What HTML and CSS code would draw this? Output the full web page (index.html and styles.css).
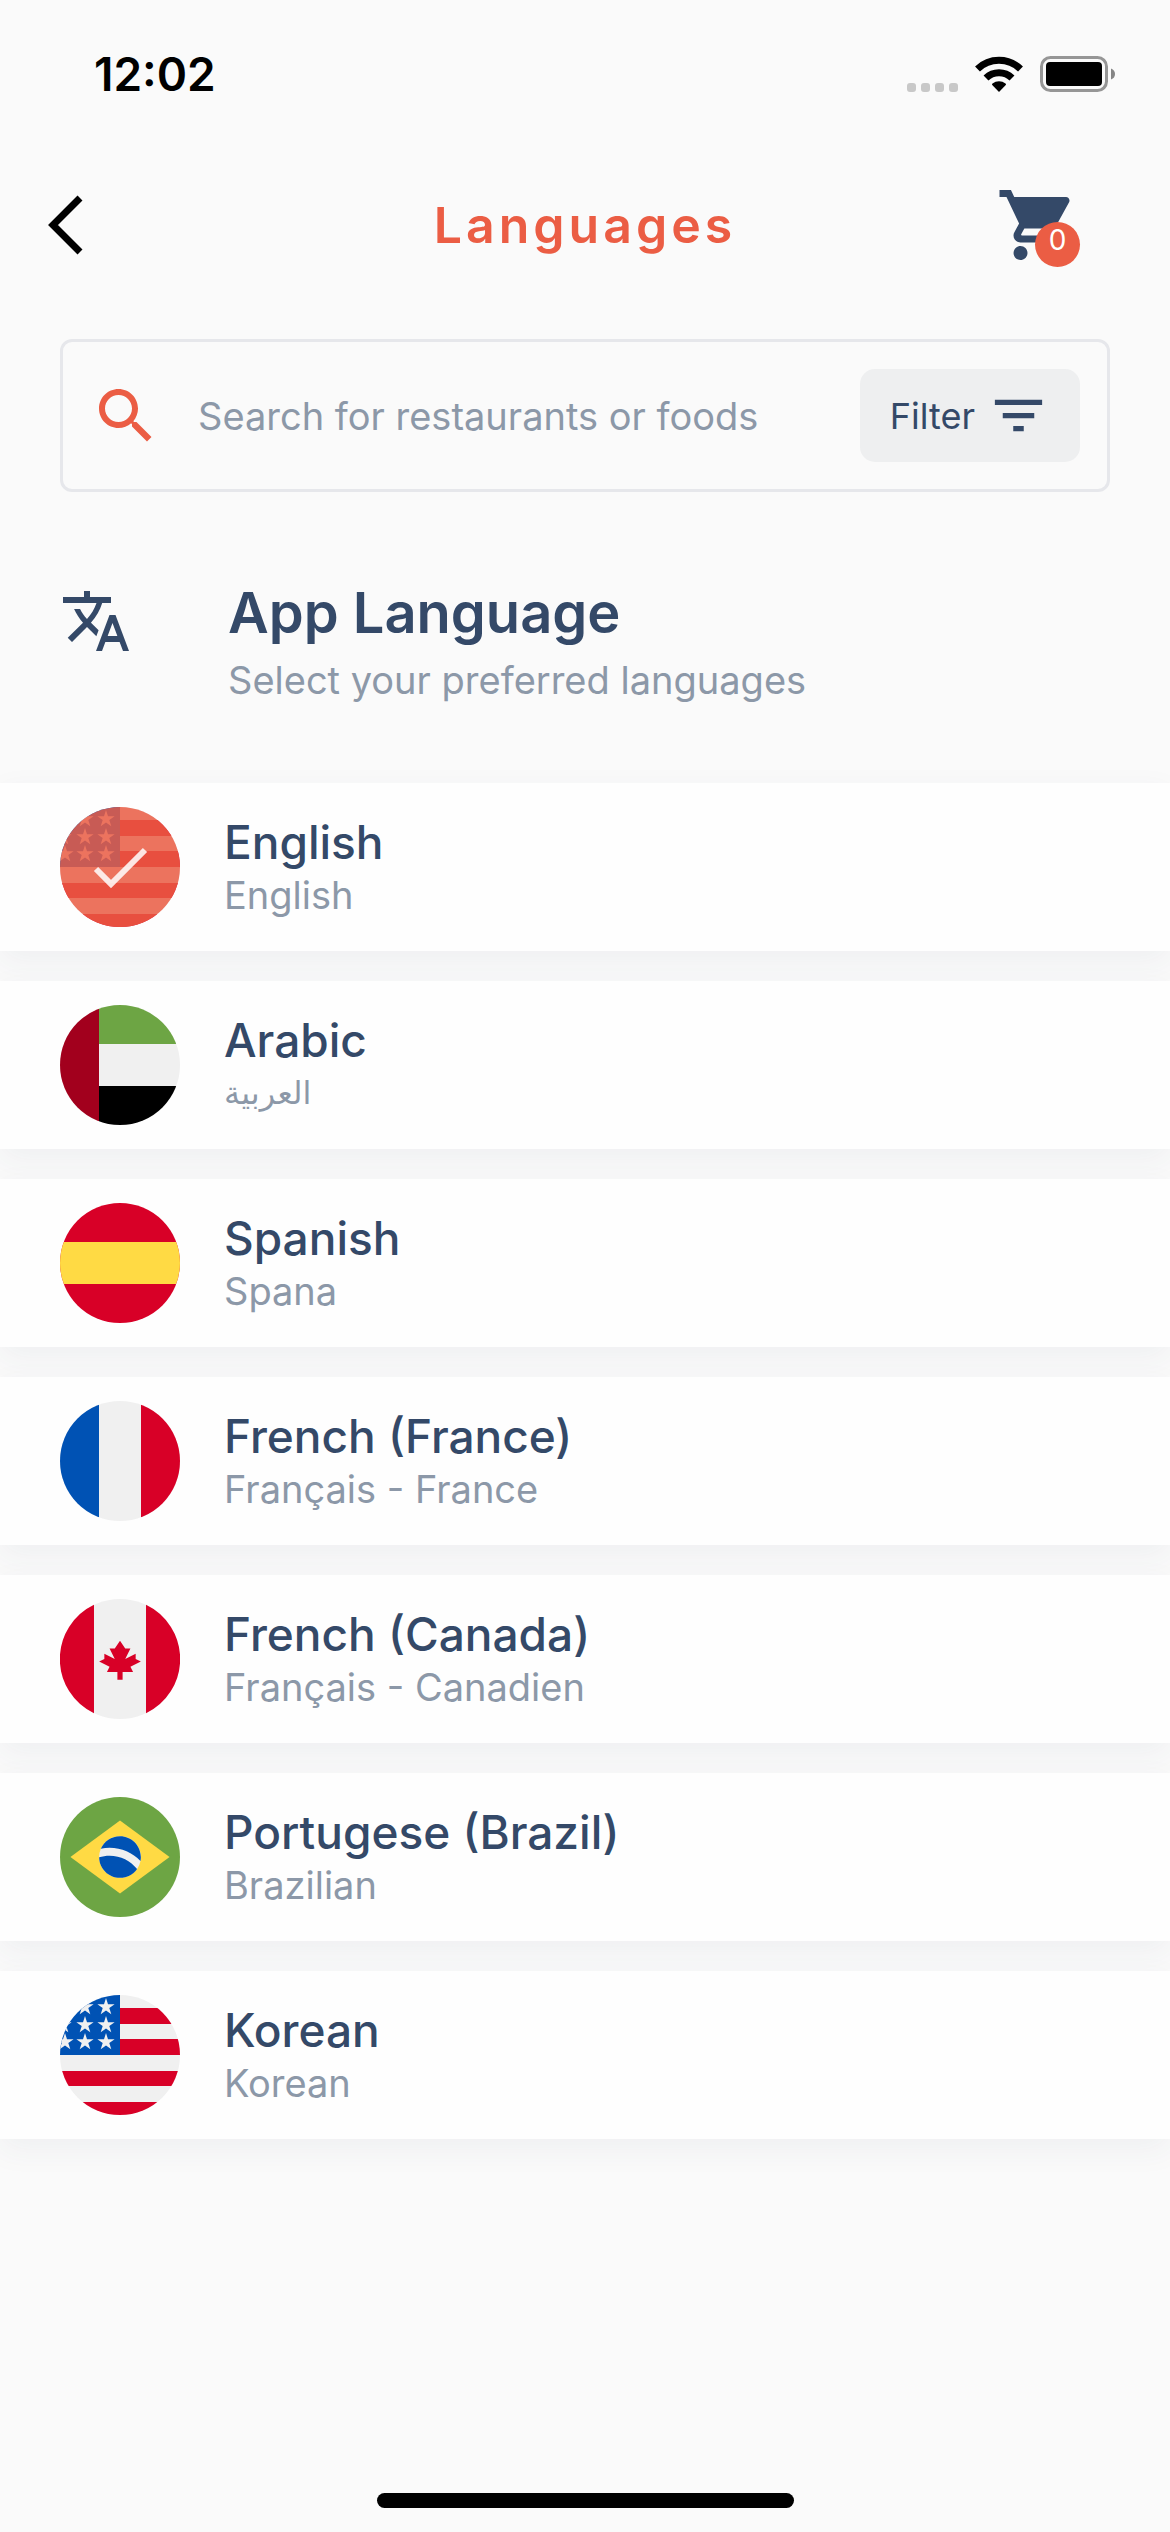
FILE: index.html
```html
<!DOCTYPE html>
<html lang="en">
<head>
<meta charset="utf-8">
<meta name="viewport" content="width=device-width, initial-scale=1">
<title>Languages</title>
<link rel="stylesheet" href="styles.css">
</head>
<body>
<svg class="defs" aria-hidden="true">
  <defs>
    <clipPath id="round"><circle cx="60" cy="60" r="60"/></clipPath>
    <path id="star" d="M0-9 2-2.8H8.6L3.3 1.1 5.3 7.3 0 3.5-5.3 7.3-3.3 1.1-8.6-2.8H-2Z"/>
    <symbol id="flag-us" viewBox="0 0 120 120">
      <g clip-path="url(#round)">
        <path fill="#f0f0f0" d="M0 0h120v120H0z"/>
        <path fill="#d80027" d="M60 13h60v16H60zM60 44h60v16H60zM0 76h120v15H0zM0 107h120v13H0z"/>
        <path fill="#0052b4" d="M0 0h60v60H0z"/>
        <g fill="#f0f0f0">
          <use href="#star" x="25" y="12"/><use href="#star" x="46" y="12"/>
          <use href="#star" x="3" y="30"/><use href="#star" x="25" y="30"/><use href="#star" x="46" y="30"/>
          <use href="#star" x="5" y="47"/><use href="#star" x="25" y="47"/><use href="#star" x="46" y="47"/>
        </g>
      </g>
    </symbol>
  </defs>
</svg>

<div class="status">
  <time class="status-time">12:02</time>
  <div class="status-icons">
    <svg width="51" height="36" viewBox="0 0 51 36" fill="#c8c8c8" aria-hidden="true">
      <rect y="27" width="9" height="9" rx="3"/><rect x="14" y="27" width="9" height="9" rx="3"/><rect x="28" y="27" width="9" height="9" rx="3"/><rect x="42" y="27" width="9" height="9" rx="3"/>
    </svg>
    <svg width="48" height="36" viewBox="0 0 48 36" aria-hidden="true">
      <path fill="none" stroke="#000" stroke-width="7" d="M2.500 13a31 31 0 0 1 43 0M11 22a18.500 18.500 0 0 1 26 0"/>
      <path d="M24 36 17 28.800q0-.8.500-1.200a10.500 10.500 0 0 1 13 0q.5.400.5 1.200Z"/>
    </svg>
    <svg width="76" height="36" viewBox="0 0 76 36" aria-hidden="true">
      <rect x="1.500" y="1.500" width="65" height="33" rx="9" fill="none" stroke="#969696" stroke-width="3"/>
      <rect x="6" y="6" width="56" height="24" rx="4"/>
      <path fill="#858585" d="M71 12.500q4 1.500 4 5.500t-4 5.500z"/>
    </svg>
  </div>
</div>

<header class="bar">
  <button class="icon-button" type="button" aria-label="Back">
    <svg width="36" height="60" viewBox="0 0 36 60" aria-hidden="true"><path fill="none" stroke="#000" stroke-width="7" d="M33 3 6 30l27 27"/></svg>
  </button>
  <h1 class="bar-title">Languages</h1>
  <button class="icon-button cart" type="button" aria-label="Cart">
    <svg width="84" height="84" viewBox="0 0 24 24" fill="#344968" aria-hidden="true"><path d="M7 18c-1.100 0-1.990.9-1.990 2S5.900 22 7 22s2-.9 2-2-.9-2-2-2zM1 2v2h2l3.600 7.590-1.350 2.450c-.16.280-.25.610-.25.960 0 1.100.9 2 2 2h12v-2H7.420c-.14 0-.25-.11-.25-.25l.03-.12.9-1.630h7.450c.75 0 1.410-.41 1.750-1.030l3.580-6.490c.08-.14.12-.31.12-.48 0-.55-.45-1-1-1H5.210l-.94-2H1z"/></svg>
    <span class="badge">0</span>
  </button>
</header>

<main>
  <form class="search">
    <svg width="72" height="72" viewBox="0 0 24 24" fill="#eb5d44" aria-hidden="true"><path d="M15.500 14h-.79l-.28-.27C15.410 12.590 16 11.110 16 9.500 16 5.910 13.090 3 9.500 3S3 5.910 3 9.500 5.910 16 9.500 16c1.610 0 3.090-.59 4.230-1.570l.27.280v.79l5 4.990L20.490 19l-4.990-5zm-6 0C7.010 14 5 11.990 5 9.500S7.010 5 9.500 5 14 7.010 14 9.500 11.990 14 9.500 14z"/></svg>
    <input class="search-input" type="text" aria-label="Search" placeholder="Search for restaurants or foods">
    <button class="filter" type="button">
      Filter
      <svg width="63" height="63" viewBox="0 0 24 24" fill="#344968" aria-hidden="true"><path d="M10 18h4v-2h-4v2zM3 6v2h18V6H3zm3 7h12v-2H6v2z"/></svg>
    </button>
  </form>

  <section class="intro">
    <svg class="intro-icon" width="72" height="72" viewBox="0 0 24 24" fill="#344968" aria-hidden="true"><path d="M12.870 15.070l-2.540-2.510.03-.03c1.740-1.940 2.980-4.170 3.710-6.530H17V4h-7V2H8v2H1v1.990h11.170C11.500 7.920 10.440 9.750 9 11.350 8.070 10.320 7.300 9.190 6.690 8h-2c.73 1.630 1.730 3.170 2.980 4.560l-5.090 5.020L4 19l5-5 3.110 3.110.76-2.040zM18.500 10h-2L12 22h2l1.120-3h4.750L21 22h2l-4.500-12zm-2.620 7l1.620-4.330L19.120 17h-3.240z"/></svg>
    <div>
      <h2 class="intro-title">App Language</h2>
      <p class="sub intro-sub">Select your preferred languages</p>
    </div>
  </section>

  <div class="list" role="radiogroup" aria-label="App Language">
    <label class="lang">
      <input class="lang-radio" type="radio" name="lang" checked>
      <span class="flag">
        <svg width="120" height="120" aria-hidden="true"><use href="#flag-us"/></svg>
        <svg class="tick" width="120" height="120" viewBox="0 0 120 120" aria-hidden="true"><circle cx="60" cy="60" r="60" fill="#eb5d44" fill-opacity=".85"/><path fill="none" stroke="#fff" stroke-opacity=".85" stroke-width="6" d="m36 62 15 15 34-34"/></svg>
      </span>
      <span class="lang-text"><span class="lang-name">English</span><span class="sub">English</span></span>
    </label>

    <label class="lang">
      <input class="lang-radio" type="radio" name="lang">
      <span class="flag">
        <svg width="120" height="120" viewBox="0 0 120 120" aria-hidden="true"><g clip-path="url(#round)"><path fill="#f0f0f0" d="M0 0h120v120H0z"/><path fill="#6da544" d="M39 0h81v39H39z"/><path d="M39 81h81v39H39z"/><path fill="#a2001d" d="M0 0h39v120H0z"/></g></svg>
      </span>
      <span class="lang-text"><span class="lang-name">Arabic</span><span class="sub sub-arabic" lang="ar">العربية</span></span>
    </label>

    <label class="lang">
      <input class="lang-radio" type="radio" name="lang">
      <span class="flag">
        <svg width="120" height="120" viewBox="0 0 120 120" aria-hidden="true"><g clip-path="url(#round)"><path fill="#d80027" d="M0 0h120v120H0z"/><path fill="#ffda44" d="M0 39h120v42H0z"/></g></svg>
      </span>
      <span class="lang-text"><span class="lang-name">Spanish</span><span class="sub">Spana</span></span>
    </label>

    <label class="lang">
      <input class="lang-radio" type="radio" name="lang">
      <span class="flag">
        <svg width="120" height="120" viewBox="0 0 120 120" aria-hidden="true"><g clip-path="url(#round)"><path fill="#f0f0f0" d="M0 0h120v120H0z"/><path fill="#0052b4" d="M0 0h39v120H0z"/><path fill="#d80027" d="M81 0h39v120H81z"/></g></svg>
      </span>
      <span class="lang-text"><span class="lang-name">French (France)</span><span class="sub">Français - France</span></span>
    </label>

    <label class="lang">
      <input class="lang-radio" type="radio" name="lang">
      <span class="flag">
        <svg width="120" height="120" viewBox="0 0 512 512" aria-hidden="true"><circle cx="256" cy="256" r="256" fill="#f0f0f0"/><g fill="#d80027"><path d="M145 25a256 256 0 0 0 0 462zM367 25a256 256 0 0 1 0 462z"/><path d="M300.500 289.400 345 267.100 322.800 256v-22.300L278.300 256l22.200-44.500h-22.200L256 178.100l-22.300 33.400h-22.200l22.200 44.500-44.500-22.300V256L167 267.100l44.500 22.300-11.200 22.300h44.600V345h22.200v-33.300h44.600z"/></g></svg>
      </span>
      <span class="lang-text"><span class="lang-name">French (Canada)</span><span class="sub">Français - Canadien</span></span>
    </label>

    <label class="lang">
      <input class="lang-radio" type="radio" name="lang">
      <span class="flag">
        <svg width="120" height="120" viewBox="0 0 512 512" aria-hidden="true"><circle cx="256" cy="256" r="256" fill="#6da544"/><path fill="#ffda44" d="m256 100.200 211.500 155.800L256 411.800 44.500 256z"/><circle cx="256" cy="256" r="89" fill="#f0f0f0"/><path fill="#0052b4" d="M211.478 250.435c-15.484 0-30.427 2.355-44.493 6.725.623 48.640 40.227 87.884 89.015 87.884 30.168 0 56.812-15.017 72.919-37.968-27.557-34.497-69.958-56.641-117.441-56.641zM343.393 273.060c1.072-5.524 1.651-11.223 1.651-17.060 0-49.178-39.866-89.043-89.043-89.043-36.694 0-68.194 22.201-81.826 53.899 12.050-2.497 24.526-3.812 37.305-3.812 51.717 0 98.503 21.497 131.913 56.016z"/></svg>
      </span>
      <span class="lang-text"><span class="lang-name">Portugese (Brazil)</span><span class="sub">Brazilian</span></span>
    </label>

    <label class="lang">
      <input class="lang-radio" type="radio" name="lang">
      <span class="flag"><svg width="120" height="120" aria-hidden="true"><use href="#flag-us"/></svg></span>
      <span class="lang-text"><span class="lang-name">Korean</span><span class="sub">Korean</span></span>
    </label>
  </div>
</main>

<div class="home-indicator"></div>
</body>
</html>
```
FILE: styles.css
```css
* {
  box-sizing: border-box;
}

body {
  display: flex;
  flex-direction: column;
  min-height: 100vh;
  margin: 0;
  background: #fafafa;
  color: #344968;
  font-family: Inter, "Open Sans", "DejaVu Sans", sans-serif;
}

h1, h2, p {
  margin: 0;
}

svg {
  display: block;
  flex: none;
}

button {
  border: 0;
  padding: 0;
  background: none;
  color: inherit;
  font: inherit;
  cursor: pointer;
}

.defs {
  position: absolute;
  width: 0;
  height: 0;
}

.status {
  display: flex;
  justify-content: space-between;
  align-items: center;
  padding: 44px 54px 28px 94px;
  color: #000;
}

.status-time {
  font-size: 46px;
  font-weight: 600;
  line-height: 60px;
}

.status-icons {
  display: flex;
  gap: 17px;
}

.bar {
  display: grid;
  grid-template-columns: 1fr auto 1fr;
  align-items: center;
  padding: 51px 47px 72px;
}

.bar-title {
  color: #eb5d44;
  font-size: 50px;
  font-weight: 600;
  line-height: 72px;
  letter-spacing: 4px;
}

.icon-button {
  position: relative;
  justify-self: start;
}

.cart {
  justify-self: end;
  margin-right: 43px;
}

.badge {
  position: absolute;
  right: 0;
  bottom: 0;
  width: 45px;
  height: 45px;
  border-radius: 50%;
  background: #eb5d44;
  color: #fff;
  font-size: 28px;
  line-height: 36px;
  text-align: center;
}

.search {
  display: flex;
  align-items: center;
  margin: 0 60px;
  padding: 27px;
  border: 3px solid #e6e7eb;
  border-radius: 12px;
}

.search-input {
  flex: 1;
  min-width: 0;
  margin-left: 36px;
  padding: 0;
  border: 0;
  outline: 0;
  background: none;
  color: #344968;
  font: inherit;
  font-size: 38px;
  line-height: 50px;
}

.search-input::placeholder {
  color: #8c98a8;
  opacity: 1;
}

.filter {
  display: flex;
  align-items: center;
  gap: 12px;
  padding: 15px 30px;
  border-radius: 15px;
  background: #eeeff0;
  font-size: 36px;
  line-height: 50px;
}

.intro {
  display: flex;
  gap: 96px;
  padding: 85px 60px 78px;
}

.intro-icon {
  margin-top: 8px;
}

.intro-title {
  font-size: 56px;
  font-weight: 600;
  line-height: 72px;
}

.intro-sub {
  margin-top: 6px;
}

.sub {
  color: #8c98a8;
  font-size: 38px;
  line-height: 50px;
}

.sub-arabic {
  font-size: 32px;
}

.list {
  display: grid;
  gap: 30px;
}

.lang {
  display: flex;
  align-items: center;
  gap: 44px;
  padding: 24px 60px;
  background: #fefefe;
  box-shadow: 0 10px 30px rgba(52, 73, 94, 0.06);
  cursor: pointer;
}

.lang-radio {
  position: absolute;
  width: 1px;
  height: 1px;
  margin: 0;
  opacity: 0;
}

.flag {
  position: relative;
}

.tick {
  position: absolute;
  inset: 0;
  visibility: hidden;
}

.lang-radio:checked + .flag .tick {
  visibility: visible;
}

.lang-text {
  display: flex;
  flex-direction: column;
  align-items: flex-start;
}

.lang-name {
  font-size: 46px;
  font-weight: 500;
  line-height: 56px;
}

.home-indicator {
  width: 417px;
  height: 15px;
  margin: auto auto 24px;
  border-radius: 8px;
  background: #000;
}
```
